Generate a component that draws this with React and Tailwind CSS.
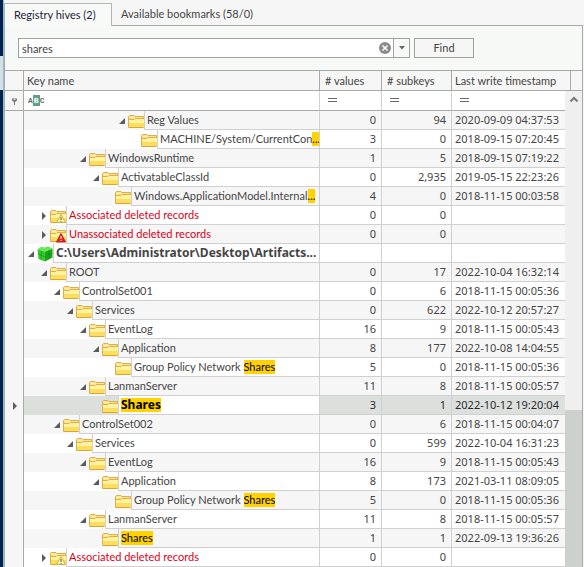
import React from "react";

const ROWS = [
  { level: 7, open: true, text: "Reg Values", v: "0", s: "94", t: "2020-09-09 04:37:53" },
  { level: 8, text: "MACHINE/System/CurrentCon", hit: "...", v: "3", s: "0", t: "2018-09-15 07:20:45" },
  { level: 4, open: true, text: "WindowsRuntime", v: "1", s: "5", t: "2018-09-15 07:19:22" },
  { level: 5, open: true, text: "ActivatableClassId", v: "0", s: "2,935", t: "2019-05-15 22:23:26" },
  { level: 6, text: "Windows.ApplicationModel.Internal", hit: "...", v: "4", s: "0", t: "2018-11-15 00:03:58" },
  { level: 1, open: false, icon: "warn", text: "Associated deleted records", v: "0", s: "0", t: "" },
  { level: 1, open: false, icon: "alert", text: "Unassociated deleted records", v: "0", s: "0", t: "" },
  { level: 0, open: true, icon: "hive", text: "C:\\Users\\Administrator\\Desktop\\Artifacts...", v: "", s: "", t: "" },
  { level: 1, open: true, text: "ROOT", v: "0", s: "17", t: "2022-10-04 16:32:14" },
  { level: 2, open: true, text: "ControlSet001", v: "0", s: "6", t: "2018-11-15 00:05:36" },
  { level: 3, open: true, text: "Services", v: "0", s: "622", t: "2022-10-12 20:57:27" },
  { level: 4, open: true, text: "EventLog", v: "16", s: "9", t: "2018-11-15 00:05:43" },
  { level: 5, open: true, text: "Application", v: "8", s: "177", t: "2022-10-08 14:04:55" },
  { level: 6, text: "Group Policy Network ", hit: "Shares", v: "5", s: "0", t: "2018-11-15 00:05:36" },
  { level: 4, open: true, text: "LanmanServer", v: "11", s: "8", t: "2018-11-15 00:05:57" },
  { level: 5, selected: true, text: "", hit: "Shares", v: "3", s: "1", t: "2022-10-12 19:20:04" },
  { level: 2, open: true, text: "ControlSet002", v: "0", s: "6", t: "2018-11-15 00:04:07" },
  { level: 3, open: true, text: "Services", v: "0", s: "599", t: "2022-10-04 16:31:23" },
  { level: 4, open: true, text: "EventLog", v: "16", s: "9", t: "2018-11-15 00:05:43" },
  { level: 5, open: true, text: "Application", v: "8", s: "173", t: "2021-03-11 08:09:05" },
  { level: 6, text: "Group Policy Network ", hit: "Shares", v: "5", s: "0", t: "2018-11-15 00:05:36" },
  { level: 4, open: true, text: "LanmanServer", v: "11", s: "8", t: "2018-11-15 00:05:57" },
  { level: 5, text: "", hit: "Shares", v: "1", s: "1", t: "2022-09-13 19:36:26" },
  { level: 1, open: false, icon: "warn", text: "Associated deleted records", v: "0", s: "0", t: "" },
];

const INDENT = [
  "pl-[1px]",
  "pl-[14px]",
  "pl-[27px]",
  "pl-[40px]",
  "pl-[53px]",
  "pl-[66px]",
  "pl-[79px]",
  "pl-[92px]",
  "pl-[105px]",
];

function Folder({ kind }) {
  return (
    <svg viewBox="0 0 16 16" className="size-4 shrink-0" aria-hidden="true">
      <path d="M.5 14V3.500l1-1H6l1 1h8.500V14z" fill="#fbe38c" stroke="#dcae45" />
      <path d="M2 4.500h3.500l1 1H15" stroke="#fff4c0" fill="none" />
      <path d="M1 6.500h5l1-1h9" stroke="#ddb04a" fill="none" />
      <path d="M1 7h5.500l1-1H16v8H1z" fill="#fff2a0" />
      <path d="M1 10h15v4H1z" fill="#fbdd60" />
      <path d="M.5 14.500h15" stroke="#dba531" />
      {kind === "warn" && (
        <>
          <path d="M11 6.500l4.500 8h-9z" fill="#fff7b0" stroke="#cfae48" />
          <path d="M11 9v3M11 13v1" stroke="#6b5a20" />
        </>
      )}
      {kind === "alert" && (
        <>
          <path d="M11 6.500l4.500 8.500h-9z" fill="#e3261c" stroke="#c41d16" />
          <path d="M11 9v3M11 13v1" stroke="#fff" />
        </>
      )}
    </svg>
  );
}

function Hive() {
  return (
    <svg viewBox="0 0 16 16" className="size-4 shrink-0" aria-hidden="true">
      <path d="M.5 3L8 5.500V15.500L1.500 13z" fill="#34cc2a" />
      <path d="M8 5.500L15.500 2.500V11.500L8 15.500z" fill="#1aa81a" />
      <path d="M.5 3L4.500 .8l3 .8L11 .3l4.500 2.400L8 5.500z" fill="#6ce653" />
      <path d="M1 8l7 2.800 7.500-3.600M4.300 5v8.600M11.800 4.500v8.600" stroke="#0e8c14" fill="none" strokeWidth=".6" />
    </svg>
  );
}

function Expander({ open }) {
  return (
    <svg viewBox="0 0 12 12" className="size-3 shrink-0" aria-hidden="true">
      {open === true && <path d="M9 3v6H3z" fill="#5c5c5c" />}
      {open === false && <path d="M4 2l4 4-4 4z" fill="#5c5c5c" />}
    </svg>
  );
}

function EqualsIcon() {
  return (
    <svg viewBox="0 0 10 5" className="ml-2 block h-[5px] w-[10px]" aria-hidden="true">
      <path d="M0 .5h9M0 3.500h9" stroke="#666" />
    </svg>
  );
}

function Row({ row, index }) {
  const bg = row.selected ? "bg-[#dce0dc] text-[#2b2b2b]" : index % 2 === 0 ? "bg-[#f6f6f6]" : "bg-white";
  const cell = "border-b border-r border-[#d0d0d0] py-0 pl-1 pr-[5px] text-right font-['Noto_Sans',sans-serif]";
  const color = row.icon === "warn" || row.icon === "alert" ? "text-[#dc0018]" : "";
  const bold = row.icon === "hive" || row.selected ? "font-['Noto_Sans',sans-serif] text-[12px] font-bold" : "";
  return (
    <tr className={`h-[19px] ${bg}`}>
      <td className="border-r border-[#a8aaa8] bg-[#f6f6f6] p-0">
        {row.selected && (
          <svg viewBox="0 0 18 12" className="block h-3 w-[18px]" aria-hidden="true">
            <path d="M8 2l4 4-4 4z" fill="#5f5f5f" />
          </svg>
        )}
      </td>
      <td className="border-r border-[#d0d0d0] p-0">
        <div className={`flex h-[19px] items-center ${INDENT[row.level]}`}>
          <Expander open={row.open} />
          {row.icon === "hive" ? <Hive /> : <Folder kind={row.icon} />}
          <span
            className={`flex h-[19px] min-w-0 flex-1 items-center overflow-hidden whitespace-pre border-b border-l border-[#d0d0d0] pl-[2px] leading-[14px] ${color} ${bold} ${row.selected ? "bg-white" : ""}`}
          >
            {row.text}
            {row.hit && <mark className="bg-[#ffd200] text-black">{row.hit}</mark>}
          </span>
        </div>
      </td>
      <td className={cell}>{row.v}</td>
      <td className={cell}>{row.s}</td>
      <td colSpan={2} className="border-b border-[#d0d0d0] py-0 pl-[3px] font-['Noto_Sans',sans-serif]">
        {row.t}
      </td>
    </tr>
  );
}

function HiveTable() {
  const th = "border-b border-r border-[#a8aaa8] p-0 text-left font-normal whitespace-nowrap";
  const filter = "border-b border-r border-b-[#a8aaa8] border-r-[#d0d0d0] p-0";
  return (
    <table className="w-full table-fixed border-separate border-spacing-0 bg-white">
      <colgroup>
        <col className="w-[19px]" />
        <col />
        <col className="w-[62px]" />
        <col className="w-[70px]" />
        <col className="w-[119px]" />
        <col className="w-[11px]" />
      </colgroup>
      <thead>
        <tr className="h-5 bg-[#f6f6f6]">
          <th className={th} aria-label="Row state" />
          <th className={`${th} pl-[3px]`}>Key name</th>
          <th className={`${th} pl-[5px]`}># values</th>
          <th className={`${th} pl-[5px]`}># subkeys</th>
          <th className={`${th} pl-[3px]`}>Last write timestamp</th>
          <th className="border-b border-[#a8aaa8] p-0" aria-label="Scroll" />
        </tr>
        <tr className="h-5">
          <td className="border-b border-r border-[#a8aaa8] bg-[#f6f6f6] p-0">
            <svg viewBox="0 0 18 10" className="block h-[10px] w-[18px]" aria-hidden="true">
              <path d="M7 2.500h5v2l-2 1.500v3H9V6L7 4.500z" fill="#777" />
              <path d="M8.500 3.500h2" stroke="#ddd" />
            </svg>
          </td>
          <td className={filter}>
            <div className="flex items-center pl-1 font-['Liberation_Mono',monospace] text-[8px] font-bold leading-[11px] text-[#6a6a6a]">
              <span>A</span>
              <span className="bg-[#5f9f88] px-px text-white">B</span>
              <span>C</span>
            </div>
          </td>
          <td className={filter}><EqualsIcon /></td>
          <td className={filter}><EqualsIcon /></td>
          <td colSpan={2} className="border-b border-[#a8aaa8] p-0"><EqualsIcon /></td>
        </tr>
      </thead>
      <tbody>
        {ROWS.map((row, i) => (
          <Row key={i} row={row} index={i} />
        ))}
      </tbody>
    </table>
  );
}

export default function App() {
  return (
    <div className="flex h-screen overflow-hidden bg-[#f6f6f6] font-['Lato',sans-serif] text-[11px] leading-[14px] text-[#454545]">
      <div className="flex w-1 shrink-0 flex-col border-r border-[#7cc3e0] bg-[#06224a]">
        <div className="mt-14 h-[34px] bg-[#d9dde0]" />
      </div>
      <div className="flex min-w-0 flex-1 flex-col pr-px pt-[3px]">
        <div className="flex h-[23px] shrink-0" role="tablist">
          <button type="button" role="tab" aria-selected="true" className="w-[108px] border-x border-t border-[#b4b6b4] bg-[#f8faf8] pl-[9px] text-left text-[#222238]">
            Registry hives (2)
          </button>
          <button type="button" role="tab" aria-selected="false" className="border-b border-[#a8aaa8] pl-[9px]">
            Available bookmarks (58/0)
          </button>
          <div className="flex-1 border-b border-[#a8aaa8]" />
        </div>
        <div className="flex min-h-0 flex-1 flex-col border-x border-[#a8aaa8] bg-[#f7f9f7]">
          <form className="flex h-11 shrink-0 items-center gap-1 pl-[13px]" onSubmit={(e) => e.preventDefault()}>
            <div className="flex h-5 w-[392px] items-center border border-[#a0a2a0] bg-white">
              <input
                type="text"
                aria-label="Search key names"
                defaultValue="shares"
                className="h-full min-w-0 flex-1 bg-transparent pl-[3px] outline-none"
              />
              <button type="button" aria-label="Clear" className="mr-[2px]">
                <svg viewBox="0 0 12 12" className="size-3" aria-hidden="true">
                  <circle cx="6" cy="6" r="6" fill="#8a8a8a" />
                  <path d="M3.500 3.500l5 5M8.500 3.500l-5 5" stroke="#fff" strokeWidth="1.500" />
                </svg>
              </button>
              <button type="button" aria-label="History" className="flex h-full w-4 items-center justify-center border-l border-[#a0a2a0] bg-[#f8f8f8]">
                <svg viewBox="0 0 6 4" className="h-1 w-[6px]" aria-hidden="true">
                  <path d="M0 0h6L3 3.500z" fill="#666" />
                </svg>
              </button>
            </div>
            <button type="submit" className="h-5 w-[60px] border border-[#a0a2a0] bg-[#f6f6f6]">
              Find
            </button>
          </form>
          <div className="relative min-h-0 flex-1 overflow-hidden border-t border-[#a8aaa8]">
            <HiveTable />
            <div className="absolute bottom-0 right-0 top-5 flex w-[17px] flex-col items-center bg-[#efefef]">
              <svg viewBox="0 0 10 6" className="mt-[5px] h-[6px] w-[10px] shrink-0" aria-hidden="true">
                <path d="M1.500 5.500L5 2l3.500 3.500" stroke="#777" strokeWidth="2" fill="none" />
              </svg>
              <div className="mt-[308px] w-full flex-1 bg-[#cdd1cd]" />
            </div>
          </div>
        </div>
      </div>
    </div>
  );
}
